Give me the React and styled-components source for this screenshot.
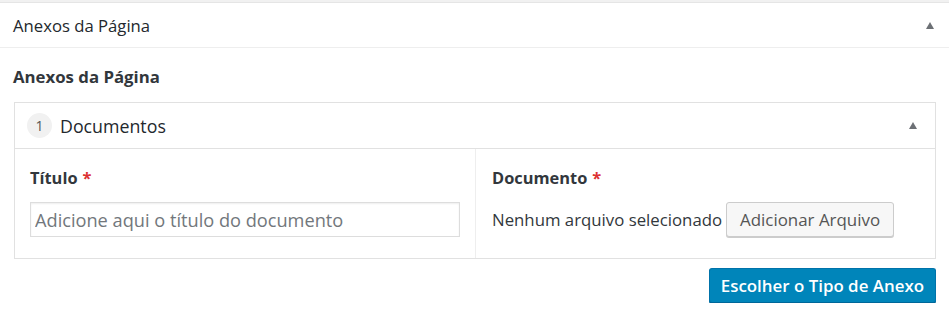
import React from "react";
import styled, { createGlobalStyle } from "styled-components";

const Global = createGlobalStyle`
  html, body {
    margin: 0;
    padding: 0;
    background: #fff;
  }
  body {
    font-family: "Open Sans", "Liberation Sans", sans-serif;
    color: #23282d;
  }
`;

const TopStrip = styled.div`
  height: 2px;
  background: #f1f1f1;
  border-bottom: 1px solid #e5e5e5;
`;

const Postbox = styled.div`
  background: #fff;
`;

const PostboxHeader = styled.div`
  display: flex;
  align-items: center;
  justify-content: space-between;
  height: 44px;
  padding: 0 15px 0 13px;
  border-bottom: 1px solid #eee;
`;

const PostboxTitle = styled.h2`
  margin: 0;
  font-size: 16.7px;
  font-weight: 400;
  color: #23282d;
`;

const Arrow = styled.span`
  width: 0;
  height: 0;
  border-left: 4.5px solid transparent;
  border-right: 4.5px solid transparent;
  border-bottom: 7px solid #6c7075;
`;

const Inside = styled.div`
  padding: 0 13px 0 14px;
`;

const FieldLabel = styled.div`
  box-sizing: border-box;
  height: 54px;
  padding-top: 17px;
  line-height: 24px;
  margin-left: -1px;
  font-size: 16.8px;
  font-weight: 700;
  color: #32373c;
`;

const Repeater = styled.div`
  border: 1px solid #e1e1e1;
`;

const RowHeader = styled.div`
  display: flex;
  align-items: center;
  height: 45px;
  padding: 0 18px 0 12px;
  border-bottom: 1px solid #e1e1e1;
`;

const Num = styled.span`
  display: inline-flex;
  align-items: center;
  justify-content: center;
  width: 25px;
  height: 25px;
  border-radius: 50%;
  background: #f1f1f1;
  color: #555;
  font-size: 14px;
  margin-right: 8px;
`;

const RowTitle = styled.span`
  flex: 1;
  font-size: 17.8px;
  color: #23282d;
`;

const Fields = styled.div`
  display: grid;
  grid-template-columns: 460px 1fr;
  height: 109px;
`;

const Cell = styled.div`
  padding: 18px 16px 0 ${(p) => (p.$divider ? "16px" : "15px")};
  border-left: ${(p) => (p.$divider ? "1px solid #eee" : "none")};
`;

const Label = styled.div`
  font-size: 16.4px;
  font-weight: 700;
  color: #32373c;
  line-height: 22px;
  margin-bottom: 13px;
`;

const Req = styled.span`
  color: #dc3232;
  margin-left: 5px;
`;

const TextInput = styled.input`
  box-sizing: border-box;
  width: 430px;
  height: 35px;
  margin: 0;
  padding: 0 4px;
  border: 1px solid #ddd;
  box-shadow: inset 0 1px 2px rgba(0, 0, 0, 0.07);
  font-family: inherit;
  font-size: 18.2px;
  color: #32373c;
  outline: none;
  &::placeholder {
    color: #72777c;
  }
`;

const FileRow = styled.div`
  display: flex;
  align-items: center;
  gap: 4px;
  font-size: 16.8px;
  color: #32373c;
`;

const Button = styled.button`
  box-sizing: border-box;
  height: 35px;
  padding: 0 ${(p) => (p.$primary ? "11px" : "13px")};
  font-family: inherit;
  font-size: 16.9px;
  border-radius: 3px;
  cursor: pointer;
  background: ${(p) => (p.$primary ? "#0085ba" : "#f7f7f7")};
  color: ${(p) => (p.$primary ? "#fff" : "#555")};
  font-weight: ${(p) => (p.$primary ? 600 : 400)};
  border: 1px solid ${(p) => (p.$primary ? "#0073aa" : "#ccc")};
  border-bottom-color: ${(p) => (p.$primary ? "#006799" : "#ccc")};
  box-shadow: 0 1px 0 ${(p) => (p.$primary ? "#006799" : "#ccc")};
`;

const Actions = styled.div`
  display: flex;
  justify-content: flex-end;
  padding: 9px 0 0;
`;

export default function App() {
  return (
    <>
      <Global />
      <TopStrip />
      <Postbox>
        <PostboxHeader>
          <PostboxTitle>Anexos da Página</PostboxTitle>
          <Arrow />
        </PostboxHeader>
        <Inside>
          <FieldLabel>Anexos da Página</FieldLabel>
          <Repeater>
            <RowHeader>
              <Num>1</Num>
              <RowTitle>Documentos</RowTitle>
              <Arrow />
            </RowHeader>
            <Fields>
              <Cell>
                <Label>
                  Título<Req>*</Req>
                </Label>
                <TextInput placeholder="Adicione aqui o título do documento" />
              </Cell>
              <Cell $divider>
                <Label>
                  Documento<Req>*</Req>
                </Label>
                <FileRow>
                  Nenhum arquivo selecionado
                  <Button>Adicionar Arquivo</Button>
                </FileRow>
              </Cell>
            </Fields>
          </Repeater>
          <Actions>
            <Button $primary>Escolher o Tipo de Anexo</Button>
          </Actions>
        </Inside>
      </Postbox>
    </>
  );
}
